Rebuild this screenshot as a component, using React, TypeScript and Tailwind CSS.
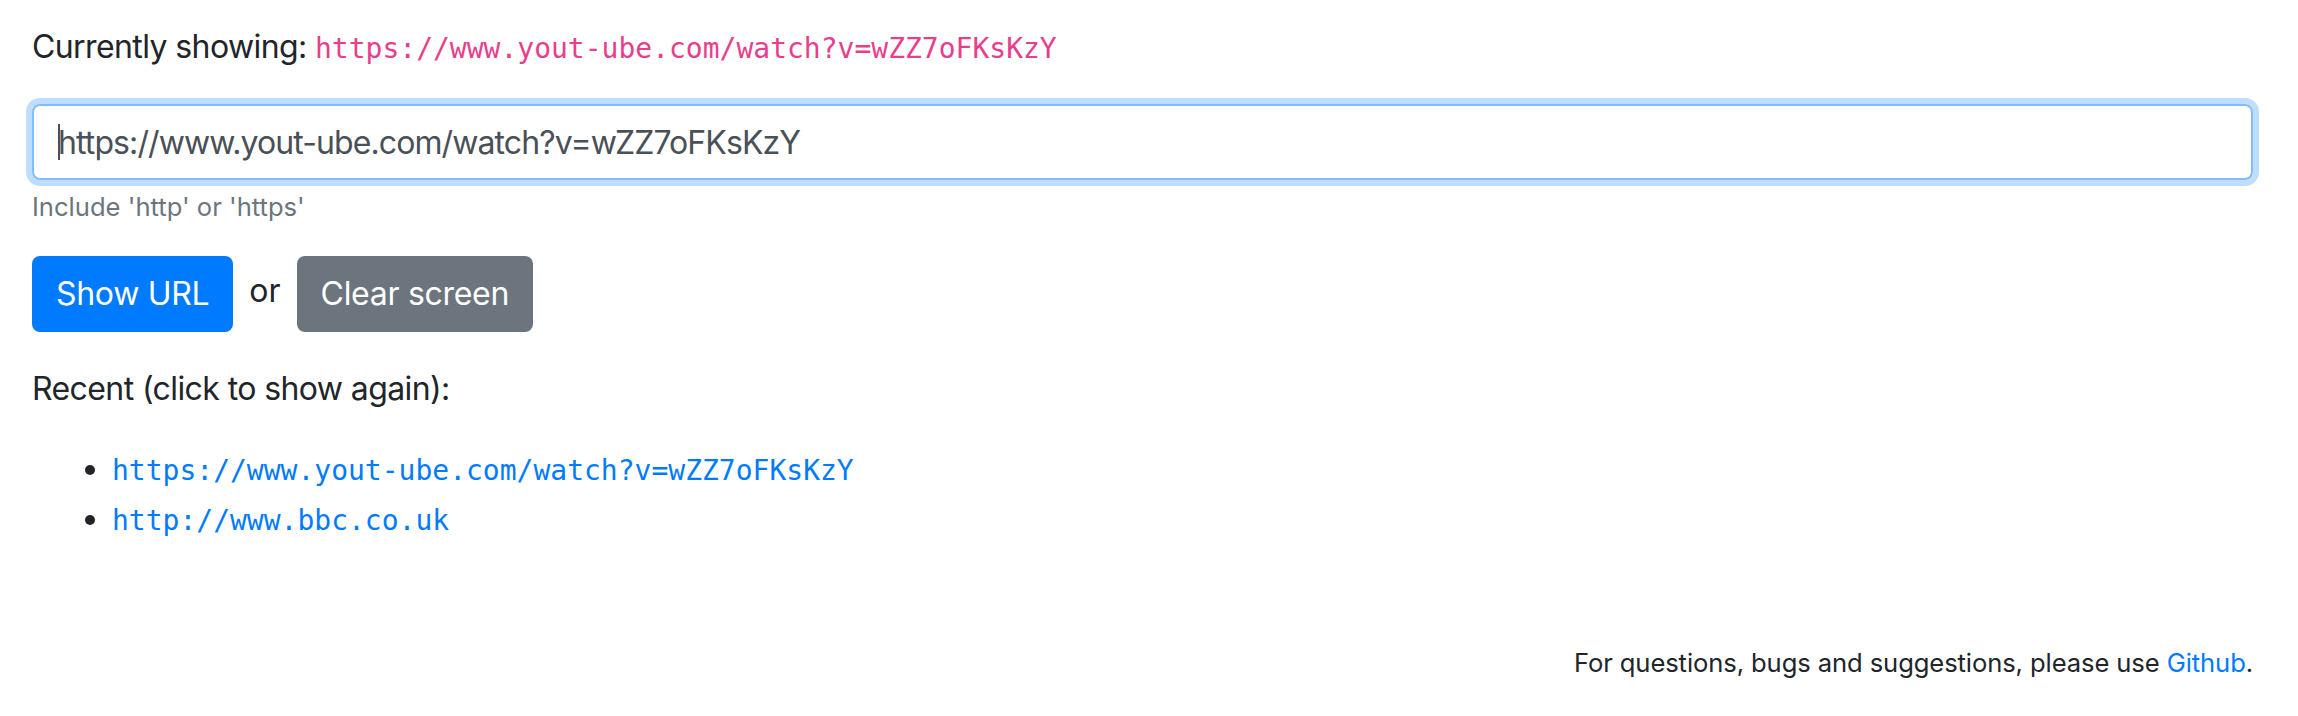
export default function App() {
  const current = "https://www.yout-ube.com/watch?v=wZZ7oFKsKzY";
  const recent = ["https://www.yout-ube.com/watch?v=wZZ7oFKsKzY", "http://www.bbc.co.uk"];

  return (
    <div className="w-full h-[716px] bg-white flex flex-col pl-[32px] pr-[45px] pt-[23px] font-['Inter',sans-serif] text-[#212529]">
      <p className="text-[32px] leading-[48px] tracking-[-0.6px]">
        Currently showing:{" "}
        <code className="font-['DejaVu_Sans_Mono',monospace] text-[28px] tracking-normal text-[#e83e8c]">{current}</code>
      </p>

      <div className="mt-[31px] flex flex-col">
        <div className="relative">
          <input
            readOnly
            value={current}
            className="w-full h-[76px] px-[24px] border-[2px] border-[#80bdff] rounded-[8px] text-[32px] tracking-[-0.9px] text-[#495057] outline-none shadow-[0_0_0_6px_rgba(0,123,255,0.25)]"
          />
          {/* text caret */}
          <span className="absolute left-[26px] top-[20px] w-[2px] h-[36px] bg-[#495057]" />
        </div>
        <small className="mt-[8px] text-[25.6px] leading-[38.4px] text-[#6c757d]">Include 'http' or 'https'</small>
      </div>

      <div className="mt-[30px] flex flex-row items-center">
        <button className="h-[76px] px-[24px] rounded-[8px] bg-[#007bff] text-white text-[32px] tracking-[-0.3px]">Show URL</button>
        <span className="mx-[16px] text-[32px] -mt-[6px]">or</span>
        <button className="h-[76px] px-[24px] rounded-[8px] bg-[#6c757d] text-white text-[32px] tracking-[-0.3px]">Clear screen</button>
      </div>

      <p className="mt-[33px] mb-[32px] text-[32px] leading-[48px] tracking-[-0.6px]">Recent (click to show again):</p>

      <ul className="list-disc pl-[80px] text-[32px] leading-[48px]">
        {recent.map((u) => (
          <li key={u}>
            <a href="#" className="font-['DejaVu_Sans_Mono',monospace] text-[28px] text-[#007bff]">
              {u}
            </a>
          </li>
        ))}
      </ul>

      <p className="mt-[99px] text-right text-[25.6px] leading-[38.4px] tracking-[-0.1px]">
        For questions, bugs and suggestions, please use <a href="#" className="text-[#007bff]">Github</a>.
      </p>
    </div>
  );
}
